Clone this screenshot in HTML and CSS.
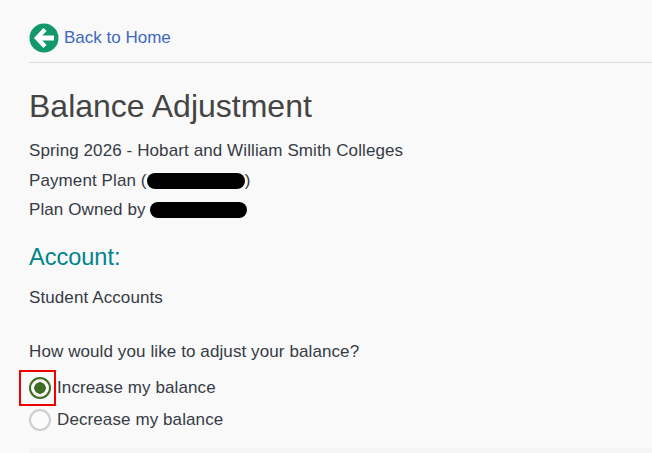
FILE: index.html
```html
<!DOCTYPE html>
<html lang="en">
<head>
<meta charset="utf-8">
<title>Balance Adjustment</title>
<link rel="stylesheet" href="styles.css">
</head>
<body>
<main class="page">
  <nav class="back">
    <svg class="back-icon" width="30" height="30" viewBox="0 0 30 30" aria-hidden="true">
      <circle cx="15" cy="15" r="14.5" fill="#13976d"/>
      <path d="M16 6.5 L8 15 L16 23.5" fill="none" stroke="#fff" stroke-width="4.4"/>
      <path d="M10 15 H25" fill="none" stroke="#fff" stroke-width="5"/>
    </svg>
    <a class="back-link" href="#">Back to Home</a>
  </nav>
  <h1 class="title">Balance Adjustment</h1>
  <p class="line">Spring 2026 - Hobart and William Smith Colleges</p>
  <p class="line">Payment Plan (<span class="redact redact-plan"></span>)</p>
  <p class="line">Plan Owned by <span class="redact redact-owner"></span></p>
  <h2 class="account">Account:</h2>
  <p class="account-name">Student Accounts</p>
  <p class="question">How would you like to adjust your balance?</p>
  <div class="options">
    <label class="option">
      <span class="focus-box"><span class="radio radio-on"></span></span>
      <span>Increase my balance</span>
    </label>
    <label class="option">
      <span class="focus-box focus-none"><span class="radio"></span></span>
      <span>Decrease my balance</span>
    </label>
  </div>
</main>
<div class="footer-band"></div>
</body>
</html>
```
FILE: styles.css
```css
html, body {
  margin: 0;
  padding: 0;
  height: 453px;
  overflow: hidden;
  background: #f9f9f9;
}
body {
  font-family: "Liberation Sans", Arial, sans-serif;
  color: #363b45;
  font-size: 17px;
  letter-spacing: 0.1px;
  position: relative;
}
.page {
  padding: 22px 0 0 29px;
}
.back {
  display: flex;
  align-items: center;
  gap: 5px;
  height: 31px;
  padding-bottom: 9px;
  border-bottom: 1px solid #dddddd;
}
.back-icon {
  display: block;
  flex: none;
}
.back-link {
  color: #3f68bf;
  font-size: 17px;
  letter-spacing: 0;
  text-decoration: none;
}
.title {
  margin: 25px 0 0;
  font-size: 32px;
  font-weight: 400;
  line-height: 37px;
  color: #444444;
  letter-spacing: 0;
}
.line {
  margin: 0;
  height: 29.5px;
  line-height: 29.5px;
  white-space: nowrap;
}
.title + .line {
  margin-top: 11px;
}
.redact {
  display: inline-block;
  height: 16px;
  border-radius: 8px;
  background: #000;
  vertical-align: -3px;
}
.redact-plan {
  width: 98px;
}
.redact-owner {
  width: 97px;
}
.account {
  margin: 17px 0 0;
  font-size: 23.5px;
  font-weight: 400;
  line-height: 30px;
  color: #00838a;
  letter-spacing: 0;
}
.account-name {
  margin: 15px 0 0;
  line-height: 22px;
}
.question {
  margin: 32px 0 0;
  line-height: 22px;
}
.options {
  margin-top: 9px;
  margin-left: -10px;
}
.option {
  display: flex;
  align-items: center;
  height: 32px;
  line-height: 32px;
}
.focus-box {
  display: flex;
  align-items: center;
  box-sizing: border-box;
  width: 37px;
  height: 36px;
  padding-left: 8px;
  border: 2px solid #f00000;
  flex: none;
  margin-right: 1px;
}
.focus-none {
  border-color: transparent;
}
.radio {
  box-sizing: border-box;
  display: block;
  width: 22px;
  height: 22px;
  border-radius: 50%;
  border: 2px solid #cccccc;
  background: #fbfbfb;
}
.radio-on {
  border-color: #3f6b25;
  background: radial-gradient(circle, #3f6b25 0 5.5px, #f9f9f9 6px);
}
.footer-band {
  position: absolute;
  left: 29px;
  right: 0;
  top: 448px;
  bottom: 0;
  background: #f5f5f5;
}
```
